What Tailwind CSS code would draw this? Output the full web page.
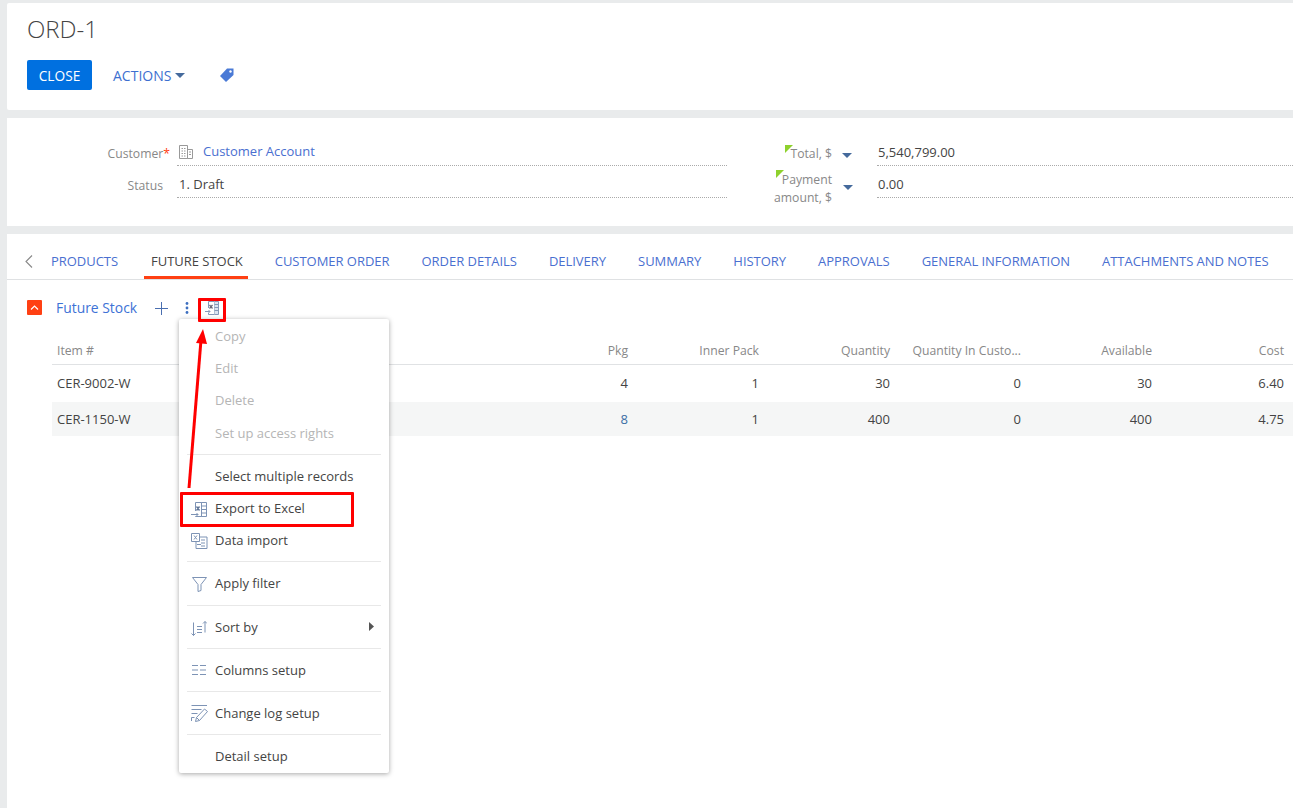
<!DOCTYPE html>
<html><head><meta charset="utf-8"><script src="https://cdn.jsdelivr.net/npm/@tailwindcss/browser@4"></script></head>
<body class="bg-[#e9ebec] font-['Open_Sans',sans-serif] text-[13px] text-[#444] overflow-hidden">
<div class="relative w-[1293px] h-[808px] overflow-hidden pl-[7px] pt-[3px] flex flex-col gap-[8px]">

<!-- header card -->
<section class="bg-white h-[107px] rounded-l-[2px] pl-[20px] pt-[11px]">
  <h1 class="text-[24px] leading-[30px] font-light text-[#444]">ORD-1</h1>
  <div class="flex items-center mt-[16px] h-[30px]">
    <button class="bg-[#0070e0] text-white text-[13.7px] h-[30px] w-[65px] rounded-[2px] pt-[2px]">CLOSE</button>
    <span class="ml-[21px] text-[#3d6fd0] text-[14px]">ACTIONS</span>
    <svg class="ml-[4px]" width="10" height="5" viewBox="0 0 10 5"><path d="M0 0h10L5 5z" fill="#456a9c"/></svg>
    <svg class="ml-[35px]" width="14" height="14" viewBox="0 0 14 14"><path d="M7 .5h6.500V7L6 14 0 8z" fill="#4a7ad6" /><circle cx="10.500" cy="3.500" r="1.200" fill="#fff"/></svg>
  </div>
</section>

<!-- form card -->
<section class="bg-white h-[108px] pt-[16px] flex">
  <div class="w-[720px] shrink-0">
    <div class="flex h-[32px]">
      <div class="w-[163px] mr-[7px] text-right text-[#888] text-[12.2px] leading-[40px] shrink-0">Customer<span class="text-[#ff4013]">*</span></div>
      <div class="flex-1 border-b border-dotted border-[#aaa] flex items-center pl-[2px] pt-[5px]">
        <svg width="14" height="14" viewBox="0 0 14 14" fill="none" stroke="#999" stroke-width="1"><path d="M.5.500h8v13h-8zM8.500 4.500h5v9h-5zM2.500 3.500h1.500M5 3.500h1.500M2.500 6h1.500M5 6h1.500M2.500 8.500h1.500M5 8.500h1.500M2.500 11h1.500M5 11h1.500M10 7h2M10 9.500h2"/></svg>
        <a class="ml-[10px] text-[#4a6fd0]">Customer Account</a>
      </div>
    </div>
    <div class="flex h-[32px]">
      <div class="w-[156px] text-right text-[#888] text-[12.2px] leading-[40px] shrink-0 mr-[14px]">Status</div>
      <div class="flex-1 border-b border-dotted border-[#aaa] pl-[2px] leading-[36px] text-[#444]">1. Draft</div>
    </div>
  </div>
  <div class="flex-1 min-w-0">
    <div class="flex h-[32px] ml-[47px]">
      <div class="relative w-[58px] text-right text-[#888] text-[12.2px] leading-[40px] shrink-0">Total, $<span class="absolute left-[11px] top-[11px] w-0 h-0 border-t-[8px] border-t-[#8ed12d] border-r-[8px] border-r-transparent"></span></div>
      <svg class="ml-[10px] mt-[19px]" width="10" height="5" viewBox="0 0 10 5"><path d="M0 0h10L5 5z" fill="#456a9c"/></svg>
      <div class="ml-[25px] flex-1 border-b border-dotted border-[#aaa] pl-[1px] leading-[36px] text-[#444]">5,540,799.00</div>
    </div>
    <div class="flex h-[32px] ml-[47px]">
      <div class="relative w-[58px] text-right text-[#888] text-[12.2px] leading-[18px] shrink-0 whitespace-nowrap pt-[5px]">Payment<br>amount, $<span class="absolute left-[2px] top-[4px] w-0 h-0 border-t-[8px] border-t-[#8ed12d] border-r-[8px] border-r-transparent"></span></div>
      <svg class="ml-[11px] mt-[19px]" width="10" height="5" viewBox="0 0 10 5"><path d="M0 0h10L5 5z" fill="#456a9c"/></svg>
      <div class="ml-[24px] flex-1 border-b border-dotted border-[#aaa] pl-[1px] leading-[36px] text-[#444]">0.00</div>
    </div>
  </div>
</section>

<!-- detail card -->
<section class="bg-white flex-1">
  <nav class="h-[46px] border-b border-[#dfe1e3] flex items-end relative">
    <svg class="absolute left-[18px] top-[21px]" width="8" height="13" viewBox="0 0 8 13" fill="none" stroke="#888" stroke-width="1.100"><path d="M7 .5 1 6.500l6 6"/></svg>
    <div class="flex gap-[32px] pl-[44px] h-[45px] text-[#4a6fd0] whitespace-nowrap leading-[55px] tracking-[-0.03px]">
      <span>PRODUCTS</span>
      <span class="relative text-[#444] ml-[1px]">FUTURE STOCK<i class="absolute left-[-7px] right-[-5px] bottom-0 h-[3px] bg-[#ff4013]"></i></span>
      <span>CUSTOMER ORDER</span><span>ORDER DETAILS</span><span>DELIVERY</span><span>SUMMARY</span><span>HISTORY</span><span>APPROVALS</span><span>GENERAL INFORMATION</span><span>ATTACHMENTS AND NOTES</span>
    </div>
  </nav>
  <div class="flex items-center h-[28px] mt-[14px] pl-[20px]">
    <span class="w-[15px] h-[15px] bg-[#ff4013] rounded-[1px] flex items-center justify-center -mt-[2px]"><svg width="9" height="5" viewBox="0 0 9 5" fill="none" stroke="#fff" stroke-width="1.200"><path d="M1 4.500 4.500 1 8 4.500"/></svg></span>
    <span class="ml-[14px] text-[13.9px] text-[#3d72d6]">Future Stock</span>
    <svg class="ml-[18px]" width="13" height="13" viewBox="0 0 13 13" stroke="#4a6fb0" stroke-width="1"><path d="M6.500 0v13M0 6.500h13"/></svg>
    <svg class="ml-[17px]" width="4" height="12" viewBox="0 0 4 12" fill="#3d6fc0"><circle cx="2" cy="1.500" r="1.400"/><circle cx="2" cy="6" r="1.400"/><circle cx="2" cy="10.500" r="1.400"/></svg>
    <svg class="ml-[16px]" width="14" height="14" viewBox="0 0 14 14" fill="none" stroke="#8498b8" stroke-width="1"><path d="M3.500 7V.5h6V13.500h-6V12"/><path d="M9.500.5h4v13h-4" fill="#dbe4f0"/><path d="M9.500 3.500h4M9.500 6.500h4M9.500 9.500h4"/><path d="M4.500 4l3 3.500M7.500 4l-3 3.500" stroke-width="1.200" stroke="#667"/><path d="M0 10.500h5M3.500 9 5 10.500 3.500 12"/></svg>
  </div>
  <div class="ml-[45px] mt-[13px]">
    <div class="grid grid-cols-[440px_131px_131px_131px_131px_131px_132px] h-[30px] border-b border-[#e0e2e4] text-[#888] text-[12.2px] leading-[32px] pl-[5px] items-start">
      <span>Item #</span><span class="text-right">Pkg</span><span class="text-right">Inner Pack</span><span class="text-right">Quantity</span><span class="text-right">Quantity In Custo...</span><span class="text-right">Available</span><span class="text-right">Cost</span>
    </div>
    <div class="grid grid-cols-[440px_131px_131px_131px_131px_131px_132px] h-[37px] leading-[37px] pl-[5px]">
      <span>CER-9002-W</span><span class="text-right">4</span><span class="text-right">1</span><span class="text-right">30</span><span class="text-right">0</span><span class="text-right">30</span><span class="text-right">6.40</span>
    </div>
    <div class="grid grid-cols-[440px_131px_131px_131px_131px_131px_132px] h-[34px] leading-[34px] pl-[5px] bg-[#f5f6f6]">
      <span>CER-1150-W</span><span class="text-right text-[#3a6ea5]">8</span><span class="text-right">1</span><span class="text-right">400</span><span class="text-right">0</span><span class="text-right">400</span><span class="text-right">4.75</span>
    </div>
  </div>
</section>

<!-- context menu -->
<div class="absolute left-[179px] top-[319px] w-[210px] h-[454px] bg-white rounded-[2px] shadow-[0_1px_5px_rgba(0,0,0,0.35)] pt-[1px] text-[13px] leading-[32px]">
  <div class="h-[32px] pl-[36px] text-[#b5b5b5]">Copy</div>
  <div class="h-[32px] pl-[36px] text-[#b5b5b5]">Edit</div>
  <div class="h-[33px] pl-[36px] text-[#b5b5b5]">Delete</div>
  <div class="h-[32px] pl-[36px] text-[#b5b5b5]">Set up access rights</div>
  <hr class="my-[5px] mx-[8px] border-[#e8e8e8]">
  <div class="h-[32px] pl-[36px]">Select multiple records</div>
  <div class="h-[32px] pl-[36px] relative">
    <svg class="absolute left-[12px] top-[10px]" width="16" height="16" viewBox="0 0 16 16" fill="none" stroke="#7d93b5" stroke-width="1"><path d="M4.500 9V.5h6v14h-6V14"/><path d="M10.500.5h5v14h-5zM10.500 4h5M10.500 7.500h5M10.500 11h5"/><path d="M5.500 4.500l3 4M8.500 4.500l-3 4" stroke="#5d7396" stroke-width="1.300"/><path d="M0 12.500h7M5.500 11 7 12.500 5.500 14"/></svg>
    Export to Excel</div>
  <div class="h-[32px] pl-[36px] relative">
    <svg class="absolute left-[12px] top-[9px]" width="17" height="16" viewBox="0 0 17 16" fill="none" stroke="#7d93b5" stroke-width="1"><path d="M.5.500h8v8h-8zM3 2.500l3 4M6 2.500l-3 4M8.500 4h7.500v11.500H5v-7M10 7h4M10 10h4M10 13h4M6 11.500h4"/></svg>
    Data import</div>
  <hr class="my-[5px] mx-[8px] border-[#e8e8e8]">
  <div class="h-[33px] pl-[36px] relative">
    <svg class="absolute left-[13px] top-[10px]" width="15" height="15" viewBox="0 0 15 15" fill="none" stroke="#7d93b5" stroke-width="1"><path d="M.5.500h14L9 7.500v6l-3 1v-7z"/></svg>
    Apply filter</div>
  <hr class="my-[5px] mx-[8px] border-[#e8e8e8]">
  <div class="h-[32px] pl-[36px] relative">
    <svg class="absolute left-[12px] top-[10px]" width="16" height="16" viewBox="0 0 16 16" fill="none" stroke="#7d93b5" stroke-width="1"><path d="M2.500 1.500v13M.5 12.500l2 2 2-2M6 5.500h5M6 8.500h5M6 11.500h5M14 11.500V.5M12 2.500l2-2 2 2"/></svg>
    Sort by
    <svg class="absolute left-[190px] top-[11px]" width="5" height="9" viewBox="0 0 5 9"><path d="M0 0l5 4.500L0 9z" fill="#555"/></svg></div>
  <hr class="my-[5px] mx-[8px] border-[#e8e8e8]">
  <div class="h-[32px] pl-[36px] relative">
    <svg class="absolute left-[13px] top-[11px]" width="14" height="10" viewBox="0 0 14 10" fill="none" stroke="#7d93b5" stroke-width="1"><path d="M0 .5h6M8 .5h6M0 5h6M8 5h6M0 9.500h6M8 9.500h6"/></svg>
    Columns setup</div>
  <hr class="my-[5px] mx-[8px] border-[#e8e8e8]">
  <div class="h-[32px] pl-[36px] relative">
    <svg class="absolute left-[12px] top-[8px]" width="17" height="17" viewBox="0 0 17 17" fill="none" stroke="#7d93b5" stroke-width="1"><path d="M.5.500h15.500M.5 4.500h10M.5 8.500h6M.5 12.500h3M.5 12.500v3.500M13.500 4l3 2.500-8 9-4 1 1-4zM5.500 12.500l3 3"/></svg>
    Change log setup</div>
  <hr class="my-[5px] mx-[8px] border-[#e8e8e8]">
  <div class="h-[32px] pl-[36px]">Detail setup</div>
</div>

<!-- annotations -->
<div class="absolute left-[198px] top-[298px] w-[28px] h-[24px] border-[3px] border-[#f00] rounded-[1px]"></div>
<div class="absolute left-[180px] top-[492px] w-[174px] h-[35px] border-[3px] border-[#f00] rounded-[1px]"></div>
<svg class="absolute left-0 top-0 pointer-events-none" width="1293" height="808" viewBox="0 0 1293 808"><path d="M189 488 201 340" stroke="#f00" stroke-width="3" fill="none"/><path d="M203 329l4 15-11 -1z" fill="#f00"/></svg>
</div>
</body></html>
